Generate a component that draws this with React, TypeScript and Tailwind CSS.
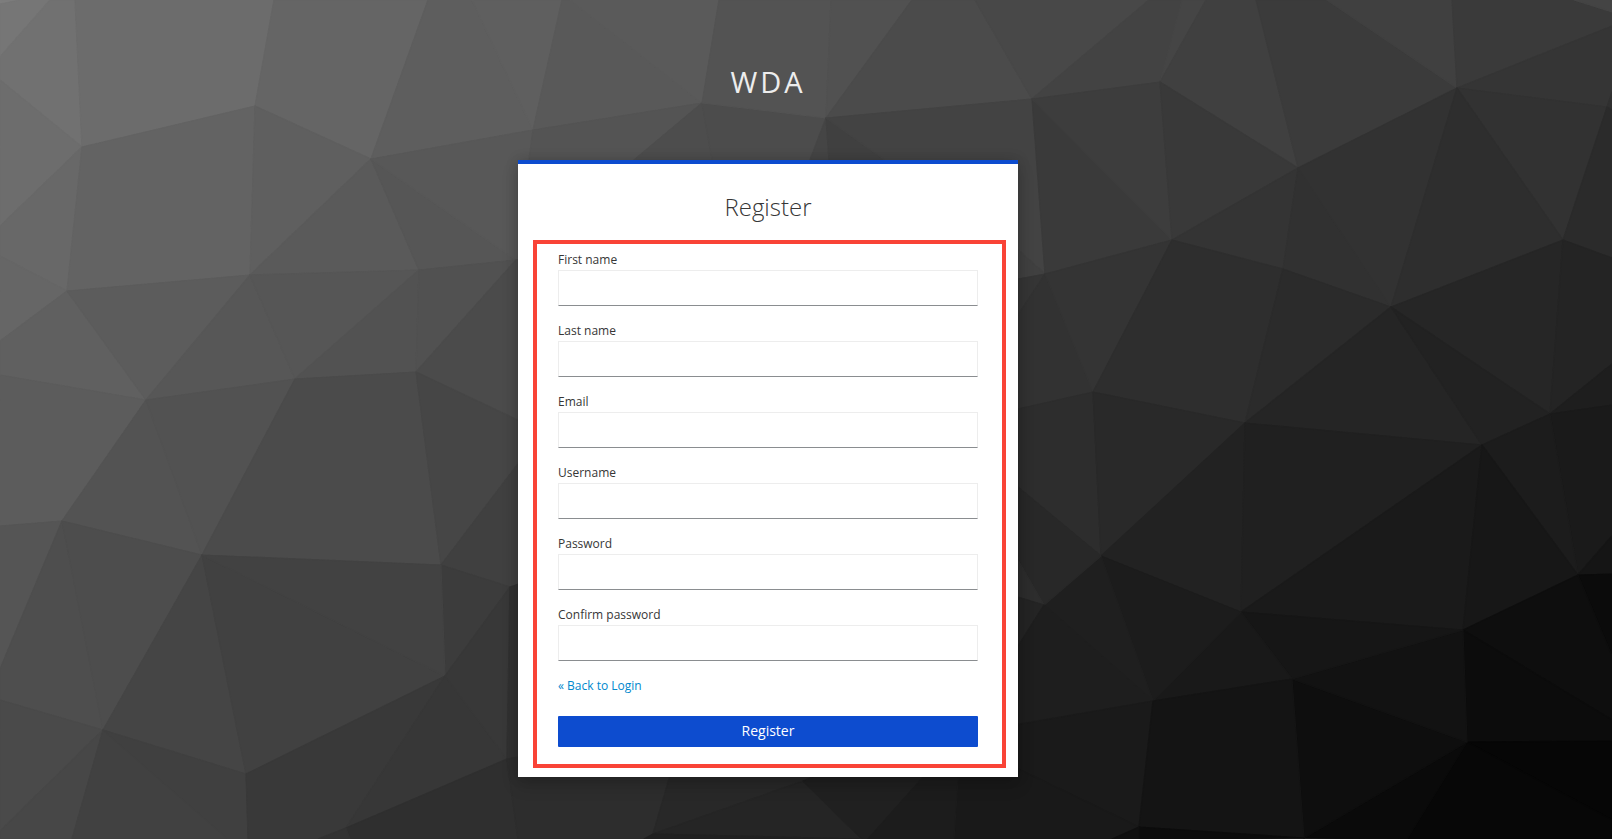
type Point = [number, number];

// Shared corners of the low-poly backdrop.
const V: Record<string, Point> = {
  a1: [82, 147], a2: [255, 106], a3: [371, 159], a4: [533, 130], a5: [67, 291],
  a6: [250, 275], a7: [419, 270], a8: [516, 260], a9: [146, 400], a10: [295, 379],
  a11: [416, 372], a12: [62, 521], a13: [202, 555], a14: [441, 565], a15: [445, 676],
  a16: [510, 587], a17: [103, 730], a18: [246, 774], a19: [346, 828], a20: [507, 759],
  b1: [702, 103], b2: [826, 118], b3: [1032, 99], b4: [1160, 82], b5: [1298, 168],
  b6: [1457, 88], b7: [1607, 107], b8: [1563, 240], b9: [1391, 307], b10: [1172, 240],
  b11: [1045, 274], b12: [1283, 269], b13: [1093, 392], b14: [1550, 414], b15: [1245, 423],
  b16: [1482, 445], b17: [1101, 556], b18: [1241, 612], b19: [1463, 630], b20: [1578, 575],
  b21: [1044, 605], b22: [1153, 701], b23: [1292, 679], b24: [1467, 742], b25: [1139, 827],
  b26: [1304, 838], c1: [653, 834], c2: [803, 781],
};

// Each facet: fill, then its outline as corner names or plain coordinates.
const FACETS: [string, string][] = [
  ["#7d7d7d", "0,0 20,0 0,4"],
  ["#767676", "0,4 20,0 50,0 0,57"],
  ["#717171", "0,57 50,0 75,0 a1 0,80"],
  ["#6c6c6c", "75,0 274,0 a2 a1"],
  ["#656565", "274,0 428,0 a3 a2"],
  ["#5e5e5e", "428,0 472,0 a4 a3"],
  ["#5f5f5f", "472,0 562,0 a4"],
  ["#6d6d6d", "0,80 a1 0,226"],
  ["#686868", "0,226 a1 a5 0,256"],
  ["#666666", "0,256 a5 0,341"],
  ["#636363", "a1 a2 a6 a5"],
  ["#5f5f5f", "a2 a3 a6"],
  ["#5a5a5a", "a3 a7 a6"],
  ["#565656", "a3 a8 a7"],
  ["#585858", "a3 a4 529,160 529,259 a8"],
  ["#606060", "0,341 a5 a9 0,375"],
  ["#5c5c5c", "a5 a6 a9"],
  ["#575757", "a6 a10 a9"],
  ["#565656", "a6 a7 a10"],
  ["#525252", "a7 a11 a10"],
  ["#515151", "a7 a8 a11"],
  ["#4b4b4b", "a8 530,259 530,426 518,420 a11"],
  ["#5c5c5c", "0,375 a9 a12 0,526"],
  ["#535353", "a9 a13 a12"],
  ["#525252", "a9 a10 a13"],
  ["#4b4b4b", "a10 a11 a14 a13"],
  ["#464646", "a11 530,426 530,448 a14"],
  ["#404040", "a14 530,448 530,580 a16"],
  ["#3c3c3c", "a14 a16 a15"],
  ["#555555", "0,526 a12 0,669"],
  ["#4e4e4e", "a12 a17 0,700 0,669"],
  ["#4d4d4d", "a12 a13 a17"],
  ["#454545", "a13 a18 a17"],
  ["#414141", "a13 a15 a18"],
  ["#424242", "a13 a14 a15"],
  ["#4a4a4a", "0,700 a17 0,831"],
  ["#474747", "0,831 a17 72,839 0,839"],
  ["#414141", "a17 228,839 72,839"],
  ["#404040", "a17 a18 248,839 228,839"],
  ["#393939", "a18 a15 a19 318,839 248,839"],
  ["#373737", "a15 a20 a19"],
  ["#383838", "a15 a16 a20"],
  ["#313131", "a16 530,580 530,755 a20"],
  ["#2f2f2f", "a19 a20 518,839 350,839"],
  ["#333333", "318,839 a19 350,839"],
  ["#2d2d2d", "a20 530,755 676,755 c1 644,839 518,839"],
  ["#595959", "562,0 570,0 b1 a4"],
  ["#5a5a5a", "570,0 719,0 b1"],
  ["#545454", "a4 b1 634,160 529,160"],
  ["#4d4d4d", "b1 712,160 634,160"],
  ["#4c4c4c", "b1 b2 810,160 712,160"],
  ["#535353", "719,0 831,0 b2 b1"],
  ["#515151", "831,0 912,0 b2"],
  ["#4b4b4b", "912,0 975,0 b3 b2"],
  ["#484848", "975,0 1149,0 b3"],
  ["#454545", "b2 829,160 810,160"],
  ["#404040", "b2 885,160 829,160"],
  ["#434343", "b2 b3 b11 1018,250 885,160"],
  ["#404040", "b11 1018,250 1018,279"],
  ["#434343", "1149,0 1182,0 b4 b3"],
  ["#454545", "1182,0 1206,0 b4"],
  ["#404040", "1206,0 1256,0 b5 b4"],
  ["#3b3b3b", "1256,0 1327,0 b6 b5"],
  ["#404040", "1327,0 1452,0 b6"],
  ["#3a3a3a", "1452,0 1574,0 1612,12 1612,26 b6"],
  ["#444444", "1574,0 1612,0 1612,12"],
  ["#353535", "b6 1612,26 1612,92 b7"],
  ["#323232", "b6 b7 b8"],
  ["#303030", "b7 1612,92 1612,110"],
  ["#2b2b2b", "b7 1612,110 1612,258 b8"],
  ["#3a3a3a", "b3 b10 b11"],
  ["#3d3d3d", "b3 b4 b10"],
  ["#393939", "b4 b5 b10"],
  ["#343434", "b5 b12 b10"],
  ["#313131", "b5 b9 b12"],
  ["#323232", "b5 b6 b9"],
  ["#2e2e2e", "b6 b8 b9"],
  ["#262626", "b8 b14 b9"],
  ["#242424", "b8 1612,258 1612,364 b14"],
  ["#353535", "1018,279 b11 1018,315"],
  ["#323232", "b11 b13 1018,409 1018,315"],
  ["#343434", "b11 b10 b13"],
  ["#2e2e2e", "b10 b12 b15 b13"],
  ["#2b2b2b", "b12 b9 b15"],
  ["#252525", "b9 b16 b15"],
  ["#222222", "b9 b14 b16"],
  ["#1e1e1e", "b14 1612,364 1612,405"],
  ["#1a1a1a", "b14 1612,405 1612,536 b20"],
  ["#1c1c1c", "b14 b20 b16"],
  ["#2d2d2d", "1018,409 b13 b17 1018,487"],
  ["#292929", "b13 b15 b17"],
  ["#222222", "b15 b18 b17"],
  ["#202020", "b15 b16 b18"],
  ["#1a1a1a", "b16 b19 b18"],
  ["#171717", "b16 b20 b19"],
  ["#151515", "b20 1612,536 1612,574"],
  ["#0b0b0b", "b20 1612,574 1612,656"],
  ["#0e0e0e", "b20 1612,656 1612,720 b19"],
  ["#0c0c0c", "b19 1612,720 1612,741 b24"],
  ["#060606", "b24 1612,741 1612,820"],
  ["#070707", "b24 1612,820 1612,839 1407,839"],
  ["#0a0a0a", "b24 1407,839 b26"],
  ["#0e0e0e", "b23 b24 b26"],
  ["#121212", "b23 b19 b24"],
  ["#161616", "b18 b19 b23"],
  ["#191919", "b18 b23 b22"],
  ["#1c1c1c", "b17 b18 b22"],
  ["#1f1f1f", "b17 b22 b21"],
  ["#282828", "1018,487 b17 b21 1018,560"],
  ["#2d2d2d", "1018,560 b21 1018,597"],
  ["#242424", "1018,597 b21 1018,646"],
  ["#1e1e1e", "b21 b22 1018,724 1018,646"],
  ["#1a1a1a", "b22 b25 1010,765 1010,726"],
  ["#191919", "958,765 1010,765 b25 1112,839 954,839"],
  ["#141414", "b22 b23 b26 b25"],
  ["#0c0c0c", "b25 b26 1139,839"],
  ["#101010", "b25 1139,839 1112,839"],
  ["#282828", "676,755 840,768 c2 c1"],
  ["#252525", "c1 c2 862,839 860,839"],
  ["#212121", "644,839 c1 860,839"],
  ["#202020", "c2 840,765 934,765 868,839 862,839"],
  ["#1c1c1c", "934,765 959,765 954,839 868,839"],
];

const outline = (corners: string) =>
  corners
    .split(" ")
    .map((corner) => (V[corner] ? V[corner].join(",") : corner))
    .join(" ");

function Backdrop() {
  return (
    <svg
      aria-hidden="true"
      viewBox="0 0 1612 839"
      preserveAspectRatio="xMidYMid slice"
      className="col-start-1 row-start-1 h-full min-h-0 w-full"
    >
      <rect width="1612" height="839" fill="#2b2b2b" />
      {FACETS.map(([fill, corners]) => (
        <polygon
          key={corners}
          points={outline(corners)}
          fill={fill}
          stroke={fill}
          strokeWidth="1.2"
          strokeLinejoin="round"
        />
      ))}
    </svg>
  );
}

const FIELDS = [
  { id: "firstName", label: "First name", type: "text" },
  { id: "lastName", label: "Last name", type: "text" },
  { id: "email", label: "Email", type: "text" },
  { id: "username", label: "Username", type: "text" },
  { id: "password", label: "Password", type: "password" },
  { id: "confirmPassword", label: "Confirm password", type: "password" },
];

export default function App() {
  return (
    <div className="grid min-h-screen grid-cols-1 grid-rows-1 bg-[#2b2b2b] font-['Open_Sans',sans-serif]">
      <Backdrop />
      <div className="z-10 col-start-1 row-start-1 flex flex-col items-center pt-16 pb-[62px] lg:pr-[76px]">
        <header className="text-[29px] leading-9 tracking-[3px] text-[#ededed] uppercase">WDA</header>
        <main className="mt-[60px] w-full max-w-[500px] border-t-4 border-[#0d4ccf] bg-white pb-[9px] shadow-[0_8px_16px_rgba(3,3,3,0.16),0_0_12px_rgba(3,3,3,0.16)]">
          <h1 className="pt-[27px] pb-[17px] text-center text-2xl leading-8 font-light text-[#363636]">Register</h1>
          <form
            className="mr-3 ml-[15px] border-4 border-[#f94336] pt-[7px] pr-6 pb-[17px] pl-[21px]"
            onSubmit={(event) => event.preventDefault()}
          >
            {FIELDS.map((field) => (
              <div key={field.id} className="mb-4 flex flex-col gap-px">
                <label htmlFor={field.id} className="text-xs leading-[18px] text-[#363636]">
                  {field.label}
                </label>
                <input
                  id={field.id}
                  type={field.type}
                  className="h-9 border border-[#ededed] border-b-[#8a8d90] bg-white px-2 text-base text-[#363636] outline-none"
                />
              </div>
            ))}
            <a href="#login" className="block text-xs leading-[18px] text-[#0088ce]">
              « Back to Login
            </a>
            <button
              type="submit"
              className="mt-[21px] block h-[31px] w-full rounded-[1px] bg-[#0d4ccf] pb-[2px] text-sm text-white"
            >
              Register
            </button>
          </form>
        </main>
      </div>
    </div>
  );
}
